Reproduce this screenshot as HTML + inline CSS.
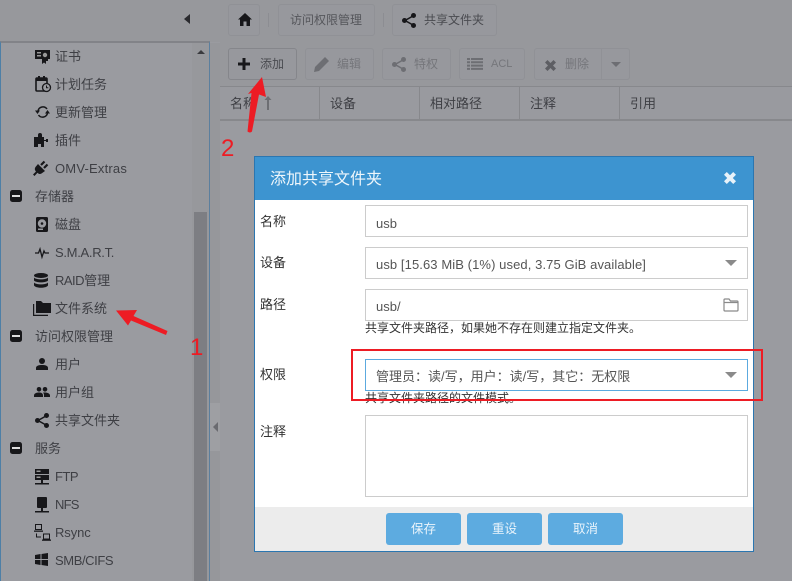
<!DOCTYPE html>
<html><head><meta charset="utf-8">
<style>
html,body{margin:0;padding:0}
body{width:792px;height:581px;overflow:hidden;position:relative;background:#9a9ba0;font-family:"Liberation Sans","Noto Sans CJK SC",sans-serif;font-size:13px;color:#3e3f44}
.a{position:absolute}
.t{position:absolute;white-space:nowrap;line-height:18px}
.btn{position:absolute;box-sizing:border-box;border:1px solid #909196;border-radius:3px;background:#97989d}
.inp{position:absolute;left:365px;width:383px;box-sizing:border-box;border:1px solid #ccc;background:#fff}
.v{position:absolute;left:376px;white-space:nowrap;line-height:18px;color:#555;font-size:13px}
.l{position:absolute;left:260px;line-height:18px;color:#333;font-size:13px}
.car{position:absolute;left:725px;width:0;height:0;border-left:6px solid transparent;border-right:6px solid transparent;border-top:6px solid #8a8a8a}
.mb{position:absolute;top:513px;width:75px;height:32px;border-radius:3px;background:#5dabe0;color:#eaf4fb;text-align:center;line-height:33px;font-size:12.500px}
svg{position:absolute;overflow:visible}
</style></head><body>

<!-- top bar -->
<div class="a" style="left:0;top:0;width:792px;height:42px;background:#97989c"></div>
<div class="a" style="left:184px;top:14px;width:0;height:0;border-top:5px solid transparent;border-bottom:5px solid transparent;border-right:6px solid #2a2a2e"></div>
<div class="btn" style="left:228px;top:4px;width:32px;height:32px"></div>
<svg style="left:238px;top:13px" width="14" height="13" viewBox="0 0 14 13"><path d="M7 0L0 6.500H2V13H5.500V8.500H8.500V13H12V6.500H14Z" fill="#17171a"/></svg>
<div class="a" style="left:268px;top:13px;width:1px;height:14px;background:#8c8d92"></div>
<div class="btn" style="left:278px;top:4px;width:97px;height:32px"></div>
<div class="t" style="left:290px;top:11px;color:#55565b;font-size:12px">访问权限管理</div>
<div class="a" style="left:383px;top:13px;width:1px;height:14px;background:#8c8d92"></div>
<div class="btn" style="left:392px;top:4px;width:105px;height:32px"></div>
<svg style="left:402px;top:13px" width="14" height="15" viewBox="0 0 14 15"><path d="M11 3L3 7.500L11 12" stroke="#17171a" stroke-width="1.500" fill="none"/><circle cx="11.500" cy="2.500" r="2.500" fill="#17171a"/><circle cx="2.500" cy="7.500" r="2.500" fill="#17171a"/><circle cx="11.500" cy="12.500" r="2.500" fill="#17171a"/></svg>
<div class="t" style="left:424px;top:11px;color:#4a4b50;font-size:12px">共享文件夹</div>

<!-- sidebar -->
<div class="a" style="left:0;top:41px;width:210px;height:540px;box-sizing:border-box;border-top:2px solid #828388;border-left:1px solid #4d7fa6;border-right:1px solid #5b7f9e;background:#9a9ba0"></div>
<div class="a" style="left:192px;top:43px;width:17px;height:538px;background:#97989c"></div>
<div class="a" style="left:194px;top:212px;width:13px;height:369px;background:#7d7e83"></div>
<div class="a" style="left:197px;top:50px;width:0;height:0;border-left:4px solid transparent;border-right:4px solid transparent;border-bottom:4px solid #3a3a3e"></div>
<div class="a" style="left:210px;top:43px;width:10px;height:538px;background:#96979b"></div>
<div class="a" style="left:210px;top:403px;width:10px;height:48px;background:#9e9fa3"></div>
<div class="a" style="left:213px;top:422px;width:0;height:0;border-top:5px solid transparent;border-bottom:5px solid transparent;border-right:5px solid #6a6b70"></div>

<div class="t" style="left:55px;top:48px">证书</div>
<div class="t" style="left:55px;top:76px">计划任务</div>
<div class="t" style="left:55px;top:104px">更新管理</div>
<div class="t" style="left:55px;top:132px">插件</div>
<div class="t" style="left:55px;top:160px;letter-spacing:.2px">OMV-Extras</div>
<div class="t" style="left:35px;top:188px">存储器</div>
<div class="t" style="left:55px;top:216px">磁盘</div>
<div class="t" style="left:55px;top:244px;letter-spacing:-.3px">S.M.A.R.T.</div>
<div class="t" style="left:55px;top:272px"><span style="letter-spacing:-.5px">RAID</span>管理</div>
<div class="t" style="left:55px;top:300px">文件系统</div>
<div class="t" style="left:35px;top:328px">访问权限管理</div>
<div class="t" style="left:55px;top:356px">用户</div>
<div class="t" style="left:55px;top:384px">用户组</div>
<div class="t" style="left:55px;top:412px">共享文件夹</div>
<div class="t" style="left:35px;top:440px">服务</div>
<div class="t" style="left:55px;top:468px;letter-spacing:-.5px">FTP</div>
<div class="t" style="left:55px;top:496px;letter-spacing:-.8px">NFS</div>
<div class="t" style="left:55px;top:524px;letter-spacing:-.1px">Rsync</div>
<div class="t" style="left:55px;top:552px;letter-spacing:-.4px">SMB/CIFS</div>

<!-- minus group icons -->
<svg style="left:10px;top:190px" width="12" height="12" viewBox="0 0 12 12"><rect width="12" height="12" rx="2.500" fill="#17171a"/><rect x="2" y="5" width="8" height="2" fill="#ddd"/></svg>
<svg style="left:10px;top:330px" width="12" height="12" viewBox="0 0 12 12"><rect width="12" height="12" rx="2.500" fill="#17171a"/><rect x="2" y="5" width="8" height="2" fill="#ddd"/></svg>
<svg style="left:10px;top:442px" width="12" height="12" viewBox="0 0 12 12"><rect width="12" height="12" rx="2.500" fill="#17171a"/><rect x="2" y="5" width="8" height="2" fill="#ddd"/></svg>

<!-- sidebar icons -->
<svg style="left:35px;top:50px" width="15" height="14" viewBox="0 0 15 14"><path d="M0 0H15V9H13V11H11V14L9 12.500L7 14V9H0Z" fill="#17171a"/><rect x="2" y="2" width="4" height="1.500" fill="#999"/><rect x="2" y="5" width="4" height="1.500" fill="#999"/><circle cx="10" cy="5" r="2.200" fill="#999"/></svg>
<svg style="left:35px;top:76px" width="16" height="16" viewBox="0 0 16 16"><rect x="1" y="2" width="11" height="13" rx="1" fill="none" stroke="#17171a" stroke-width="1.600"/><rect x="1" y="2" width="11" height="3" fill="#17171a"/><rect x="3" y="0" width="2" height="3" fill="#17171a"/><rect x="8" y="0" width="2" height="3" fill="#17171a"/><circle cx="11.500" cy="11.500" r="4" fill="#9a9ba0" stroke="#17171a" stroke-width="1.300"/><path d="M11.500 9.500V11.700H13.300" stroke="#17171a" fill="none"/></svg>
<svg style="left:35px;top:105px" width="15" height="14" viewBox="0 0 15 14"><path d="M3 6A5 5 0 0 1 12 4M12.500 8A5 5 0 0 1 3.500 10" fill="none" stroke="#17171a" stroke-width="1.500"/><path d="M0 5.500H5L2.500 9ZM10 8.500H15L12.500 5Z" fill="#17171a"/></svg>
<svg style="left:33px;top:132px" width="16" height="15" viewBox="0 0 16 15"><path d="M1 5H5V3A2 2 0 0 1 9 3V5H11V8H13V7H15V10H13V9H11V15H8V12H5V15H1Z" fill="#17171a"/></svg>
<svg style="left:33px;top:160px" width="16" height="16" viewBox="0 0 16 16"><path d="M5 4L12 11L8.500 13.500C6.500 14.500 5.500 13.800 4.500 12.800L1.500 16L0 14.500L3 11.500C2 10.500 1.200 9 2.500 7Z" fill="#17171a"/><path d="M8 5L11.500 1.500M11 8L14.500 4.500" stroke="#17171a" stroke-width="2.200"/></svg>
<svg style="left:36px;top:217px" width="12" height="15" viewBox="0 0 12 15"><rect width="12" height="15" rx="1.500" fill="#17171a"/><circle cx="6" cy="6.500" r="4.200" fill="#9a9ba0"/><circle cx="6" cy="6.500" r="1.300" fill="#17171a"/><rect x="2" y="11.500" width="5" height="1.500" fill="#9a9ba0"/></svg>
<svg style="left:35px;top:247px" width="14" height="11" viewBox="0 0 14 11"><path d="M0 6H3.500L5 2L7 10L9 4L10 6H14" fill="none" stroke="#17171a" stroke-width="1.300"/></svg>
<svg style="left:34px;top:273px" width="14" height="15" viewBox="0 0 14 15"><ellipse cx="7" cy="2.500" rx="7" ry="2.500" fill="#17171a"/><path d="M0 4.500C2 7 12 7 14 4.500V7.500C12 10 2 10 0 7.500ZM0 9.500C2 12 12 12 14 9.500V12.500C12 15.500 2 15.500 0 12.500Z" fill="#17171a"/></svg>
<svg style="left:33px;top:301px" width="18" height="15" viewBox="0 0 18 15"><path d="M3 0H8L10 2H18V12H3Z" fill="#17171a"/><path d="M0.600 3V14.400H15" fill="none" stroke="#17171a" stroke-width="1.200"/></svg>
<svg style="left:36px;top:358px" width="12" height="12" viewBox="0 0 12 12"><circle cx="6" cy="3" r="3" fill="#17171a"/><path d="M0 12V10C0 7.500 3 7 6 7S12 7.500 12 10V12Z" fill="#17171a"/></svg>
<svg style="left:34px;top:387px" width="16" height="10" viewBox="0 0 16 10"><circle cx="5" cy="2.300" r="2.300" fill="#17171a"/><circle cx="11" cy="2.300" r="2.300" fill="#17171a"/><path d="M0 10V8.500C0 6 3 5.500 5 5.500S9 6 9 8.500V10ZM10 10V8C10 7 9.500 6 9 5.700C11 5.200 16 5.700 16 8.500V10Z" fill="#17171a"/></svg>
<svg style="left:35px;top:413px" width="14" height="15" viewBox="0 0 14 15"><path d="M11 3L3 7.500L11 12" stroke="#17171a" stroke-width="1.500" fill="none"/><circle cx="11.500" cy="2.500" r="2.500" fill="#17171a"/><circle cx="2.500" cy="7.500" r="2.500" fill="#17171a"/><circle cx="11.500" cy="12.500" r="2.500" fill="#17171a"/></svg>
<svg style="left:35px;top:469px" width="14" height="16" viewBox="0 0 14 16"><rect width="14" height="5" fill="#17171a"/><rect y="6" width="14" height="5" fill="#17171a"/><rect x="1.500" y="1.500" width="4" height="1.500" fill="#999"/><rect x="1.500" y="7.500" width="4" height="1.500" fill="#999"/><rect x="6" y="11" width="2" height="3" fill="#17171a"/><rect x="0" y="14" width="14" height="1.500" fill="#17171a"/></svg>
<svg style="left:35px;top:497px" width="14" height="16" viewBox="0 0 14 16"><rect x="2" y="0" width="10" height="11" rx="1" fill="#17171a"/><rect x="6" y="11" width="2" height="3" fill="#17171a"/><rect x="0" y="14" width="14" height="1.500" fill="#17171a"/></svg>
<svg style="left:34px;top:524px" width="17" height="17" viewBox="0 0 17 17"><rect x="1.500" y="0.500" width="6" height="5" fill="none" stroke="#17171a"/><rect y="6.500" width="9" height="1.300" fill="#17171a"/><rect x="9.500" y="10" width="6" height="5" fill="none" stroke="#17171a"/><rect x="8" y="15.500" width="9" height="1.300" fill="#17171a"/><path d="M2.500 9.500V13H7" fill="none" stroke="#17171a"/></svg>
<svg style="left:35px;top:553px" width="13" height="13" viewBox="0 0 13 13"><path d="M0 2L5.500 1V6H0ZM6.500 1L13 0V6H6.500ZM0 7H5.500V12L0 11ZM6.500 7H13V13L6.500 12Z" fill="#17171a"/></svg>

<!-- toolbar -->
<div class="a" style="left:220px;top:42px;width:572px;height:44px;background:#97989c"></div>
<div class="btn" style="left:228px;top:48px;width:69px;height:32px;border-color:#85868b"></div>
<svg style="left:238px;top:58px" width="12" height="12" viewBox="0 0 12 12"><path d="M4.500 0H7.500V4.500H12V7.500H7.500V12H4.500V7.500H0V4.500H4.500Z" fill="#17171a"/></svg>
<div class="t" style="left:260px;top:55px;color:#4a4b50;font-size:12px">添加</div>
<div class="btn" style="left:305px;top:48px;width:69px;height:32px"></div>
<svg style="left:314px;top:57px" width="15" height="15" viewBox="0 0 15 15"><path d="M11 0L15 4L5 14L0 15L1 10Z" fill="#6d6e73"/></svg>
<div class="t" style="left:337px;top:55px;color:#75767b;font-size:12px">编辑</div>
<div class="btn" style="left:382px;top:48px;width:69px;height:32px"></div>
<svg style="left:392px;top:57px" width="14" height="15" viewBox="0 0 14 15"><path d="M11 3L3 7.500L11 12" stroke="#6d6e73" stroke-width="1.500" fill="none"/><circle cx="11.500" cy="2.500" r="2.500" fill="#6d6e73"/><circle cx="2.500" cy="7.500" r="2.500" fill="#6d6e73"/><circle cx="11.500" cy="12.500" r="2.500" fill="#6d6e73"/></svg>
<div class="t" style="left:414px;top:55px;color:#75767b;font-size:12px">特权</div>
<div class="btn" style="left:459px;top:48px;width:66px;height:32px"></div>
<svg style="left:467px;top:58px" width="16" height="12" viewBox="0 0 16 12"><path d="M0 0H3V2H0ZM4 0H16V2H4ZM0 3.300H3V5.300H0ZM4 3.300H16V5.300H4ZM0 6.600H3V8.600H0ZM4 6.600H16V8.600H4ZM0 9.900H3V11.900H0ZM4 9.900H16V11.900H4Z" fill="#6d6e73"/></svg>
<div class="t" style="left:491px;top:55px;color:#75767b;font-size:11px">ACL</div>
<div class="btn" style="left:534px;top:48px;width:96px;height:32px"></div>
<div class="a" style="left:601px;top:48px;width:1px;height:32px;background:#909196"></div>
<svg style="left:545px;top:60px" width="11" height="11" viewBox="0 0 11 11"><path d="M2.500 0L5.500 3L8.500 0L11 2.500L8 5.500L11 8.500L8.500 11L5.500 8L2.500 11L0 8.500L3 5.500L0 2.500Z" fill="#5d5e63"/></svg>
<div class="t" style="left:565px;top:55px;color:#75767b;font-size:12px">删除</div>
<div class="a" style="left:611px;top:62px;width:0;height:0;border-left:5px solid transparent;border-right:5px solid transparent;border-top:5px solid #6d6e73"></div>

<!-- table header -->
<div class="a" style="left:220px;top:86px;width:572px;height:35px;box-sizing:border-box;border-top:1px solid #87888c;border-bottom:2px solid #87888c;background:#999a9f"></div>
<div class="a" style="left:319px;top:86px;width:1px;height:34px;background:#87888c"></div>
<div class="a" style="left:419px;top:86px;width:1px;height:34px;background:#87888c"></div>
<div class="a" style="left:519px;top:86px;width:1px;height:34px;background:#87888c"></div>
<div class="a" style="left:619px;top:86px;width:1px;height:34px;background:#87888c"></div>
<div class="t" style="left:230px;top:95px">名称</div>
<svg style="left:264px;top:96px" width="8" height="14" viewBox="0 0 8 14"><path d="M4 0L7.500 4H5V14H3V4H0.500Z" fill="#6d6e73"/></svg>
<div class="t" style="left:330px;top:95px">设备</div>
<div class="t" style="left:430px;top:95px">相对路径</div>
<div class="t" style="left:530px;top:95px">注释</div>
<div class="t" style="left:630px;top:95px">引用</div>

<!-- modal -->
<div class="a" style="left:254px;top:156px;width:500px;height:396px;box-sizing:border-box;border:1px solid #2b76b0;background:#fff"></div>
<div class="a" style="left:255px;top:157px;width:498px;height:43px;background:#3d94d0"></div>
<div class="t" style="left:270px;top:171px;font-size:16px;color:#eef6fb">添加共享文件夹</div>
<svg style="left:724px;top:172px" width="12" height="12" viewBox="0 0 12 12"><path d="M2.800 0L6 3.200L9.200 0L12 2.800L8.800 6L12 9.200L9.200 12L6 8.800L2.800 12L0 9.200L3.200 6L0 2.800Z" fill="#e8f2f9"/></svg>

<div class="l" style="top:213px">名称</div>
<div class="inp" style="top:205px;height:32px"></div>
<div class="v" style="top:215px">usb</div>

<div class="l" style="top:254px">设备</div>
<div class="inp" style="top:247px;height:32px"></div>
<div class="v" style="top:256px;letter-spacing:.09px">usb [15.63 MiB (1%) used, 3.75 GiB available]</div>
<div class="car" style="top:260px"></div>

<div class="l" style="top:296px">路径</div>
<div class="inp" style="top:289px;height:32px"></div>
<div class="v" style="top:298px">usb/</div>
<svg style="left:723px;top:298px" width="16" height="14" viewBox="0 0 16 14"><path d="M1 3V2C1 1.400 1.400 1 2 1H6L7.500 3H14C14.600 3 15 3.400 15 4V12C15 12.600 14.600 13 14 13H2C1.400 13 1 12.600 1 12ZM1 4.500H15" fill="none" stroke="#8a8a8a" stroke-width="1.200"/></svg>
<div class="t" style="left:365px;top:319px;font-size:12px;color:#333">共享文件夹路径，如果她不存在则建立指定文件夹。</div>

<div class="l" style="top:366px">权限</div>
<div class="inp" style="top:359px;height:32px;border-color:#5caadf"></div>
<div class="v" style="top:368px">管理员：读/写，用户：读/写，其它：无权限</div>
<div class="car" style="top:372px"></div>
<div class="t" style="left:365px;top:389px;font-size:12px;color:#333">共享文件夹路径的文件模式。</div>

<div class="l" style="top:423px">注释</div>
<div class="inp" style="top:415px;height:82px"></div>

<div class="a" style="left:255px;top:507px;width:498px;height:44px;background:#ececec"></div>
<div class="mb" style="left:386px">保存</div>
<div class="mb" style="left:467px">重设</div>
<div class="mb" style="left:548px">取消</div>

<!-- annotations -->
<div class="a" style="left:351px;top:349px;width:412px;height:52px;box-sizing:border-box;border:2px solid #ed1c24"></div>
<svg style="left:0;top:0" width="792" height="581" viewBox="0 0 792 581">
<path d="M116 310.500L137 310L133.500 316L167.500 331L166 335L131 320.500L128 325.500Z" fill="#ed1c24"/>
<path d="M262 77L266 97L259 94.500L252 131.500Q250 133.500 247.500 131.500L251.500 93L248 94Z" fill="#ed1c24"/>
<text x="190" y="355" font-family="Liberation Sans" font-size="24" fill="#ed1c24">1</text>
<text x="221" y="156" font-family="Liberation Sans" font-size="24" fill="#ed1c24">2</text>
</svg>
</body></html>
